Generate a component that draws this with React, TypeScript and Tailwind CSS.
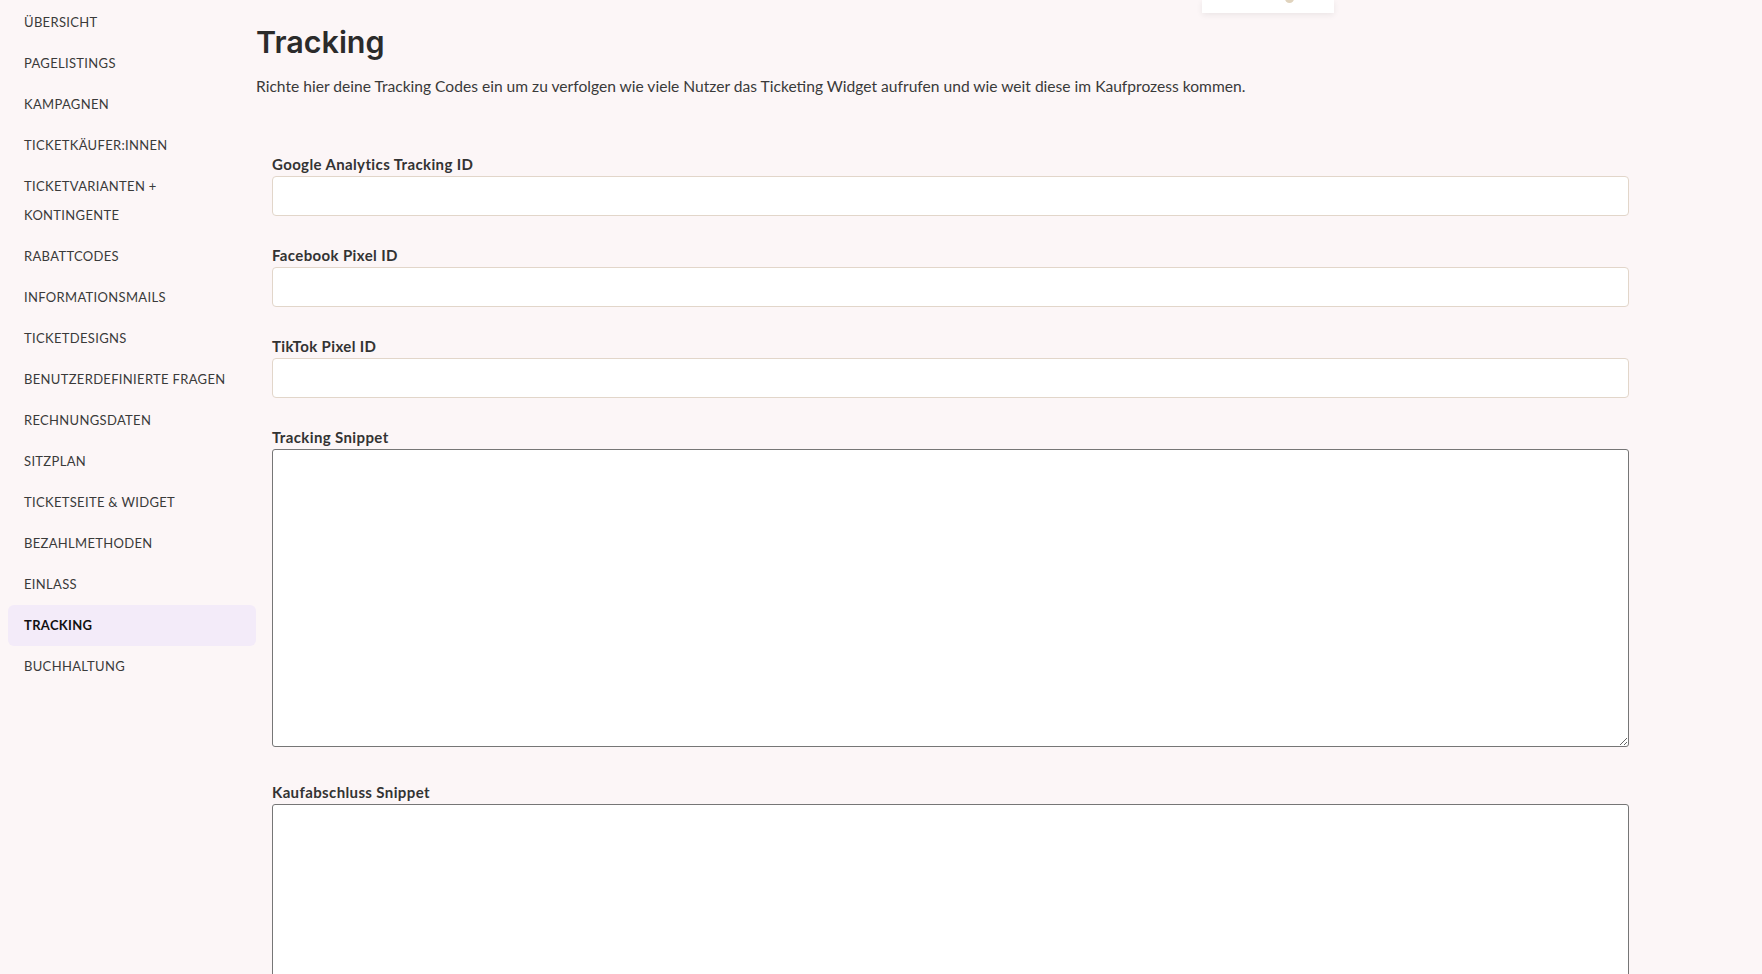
import React from "react";

const items = [
  "ÜBERSICHT",
  "PAGELISTINGS",
  "KAMPAGNEN",
  "TICKETKÄUFER:INNEN",
  "TICKETVARIANTEN + KONTINGENTE",
  "RABATTCODES",
  "INFORMATIONSMAILS",
  "TICKETDESIGNS",
  "BENUTZERDEFINIERTE FRAGEN",
  "RECHNUNGSDATEN",
  "SITZPLAN",
  "TICKETSEITE & WIDGET",
  "BEZAHLMETHODEN",
  "EINLASS",
  "TRACKING",
  "BUCHHALTUNG",
];

function Field({ label }: { label: string }) {
  return (
    <div className="flex flex-col mb-[27px]">
      <label className="h-[24px] leading-[24px] text-[15px] tracking-[0.025em] font-bold text-[#333333]">{label}</label>
      <input
        type="text"
        className="h-[40px] w-full bg-white border border-[#e2d6ca] rounded-[4px] px-3 outline-none"
      />
    </div>
  );
}

function Area({ label }: { label: string }) {
  return (
    <div className="flex flex-col mb-[33px]">
      <label className="h-[24px] leading-[24px] text-[15px] tracking-[0.025em] font-bold text-[#333333]">{label}</label>
      <textarea className="h-[298px] w-full bg-white border border-[#767676] rounded-[3px] p-2 outline-none" />
    </div>
  );
}

export default function App() {
  return (
    <div
      className="relative min-h-[974px] h-[974px] overflow-hidden bg-[#fcf6f7] text-[#3a3a3a] flex"
      style={{ fontFamily: "Lato, 'Open Sans', sans-serif" }}
    >
      <aside className="w-[256px] shrink-0 pl-2 pt-[2px]">
        <nav className="flex flex-col">
          {items.map((it) => {
            const active = it === "TRACKING";
            return (
              <div
                key={it}
                className={
                  active
                    ? "py-[6px] pl-4 pr-4 rounded-[6px] bg-[#f3ebf9] text-[13px] leading-[29px] tracking-[0.025em] font-bold text-[#111111]"
                    : "py-[6px] pl-4 pr-4 rounded-[6px] text-[13px] leading-[29px] tracking-[0.025em] text-[#3a3a3a]"
                }
              >
                {it}
              </div>
            );
          })}
        </nav>
      </aside>
      <main className="flex-1 pr-[117px]">
        <h1
          className="mt-[22px] h-[40px] leading-[40px] text-[30.5px] font-semibold text-[#2b2b2b]"
          style={{ fontFamily: "Inter, sans-serif" }}
        >
          Tracking
        </h1>
        <p className="mt-[12px] leading-[24px] text-[15.6px] text-[#3a3a3a]">
          Richte hier deine Tracking Codes ein um zu verfolgen wie viele Nutzer das Ticketing Widget aufrufen und wie weit diese im Kaufprozess kommen.
        </p>
        <form className="mt-[54px] px-4">
          <Field label="Google Analytics Tracking ID" />
          <Field label="Facebook Pixel ID" />
          <Field label="TikTok Pixel ID" />
          <Area label="Tracking Snippet" />
          <Area label="Kaufabschluss Snippet" />
        </form>
      </main>
      <div className="absolute top-0 left-[1202px] w-[132px] h-[13px] bg-white shadow-[0_2px_6px_rgba(0,0,0,0.07)] overflow-hidden">
        <div className="absolute left-[83px] top-[-6px] w-[9px] h-[9px] rounded-full bg-[#e0d3bd]" />
      </div>
    </div>
  );
}
